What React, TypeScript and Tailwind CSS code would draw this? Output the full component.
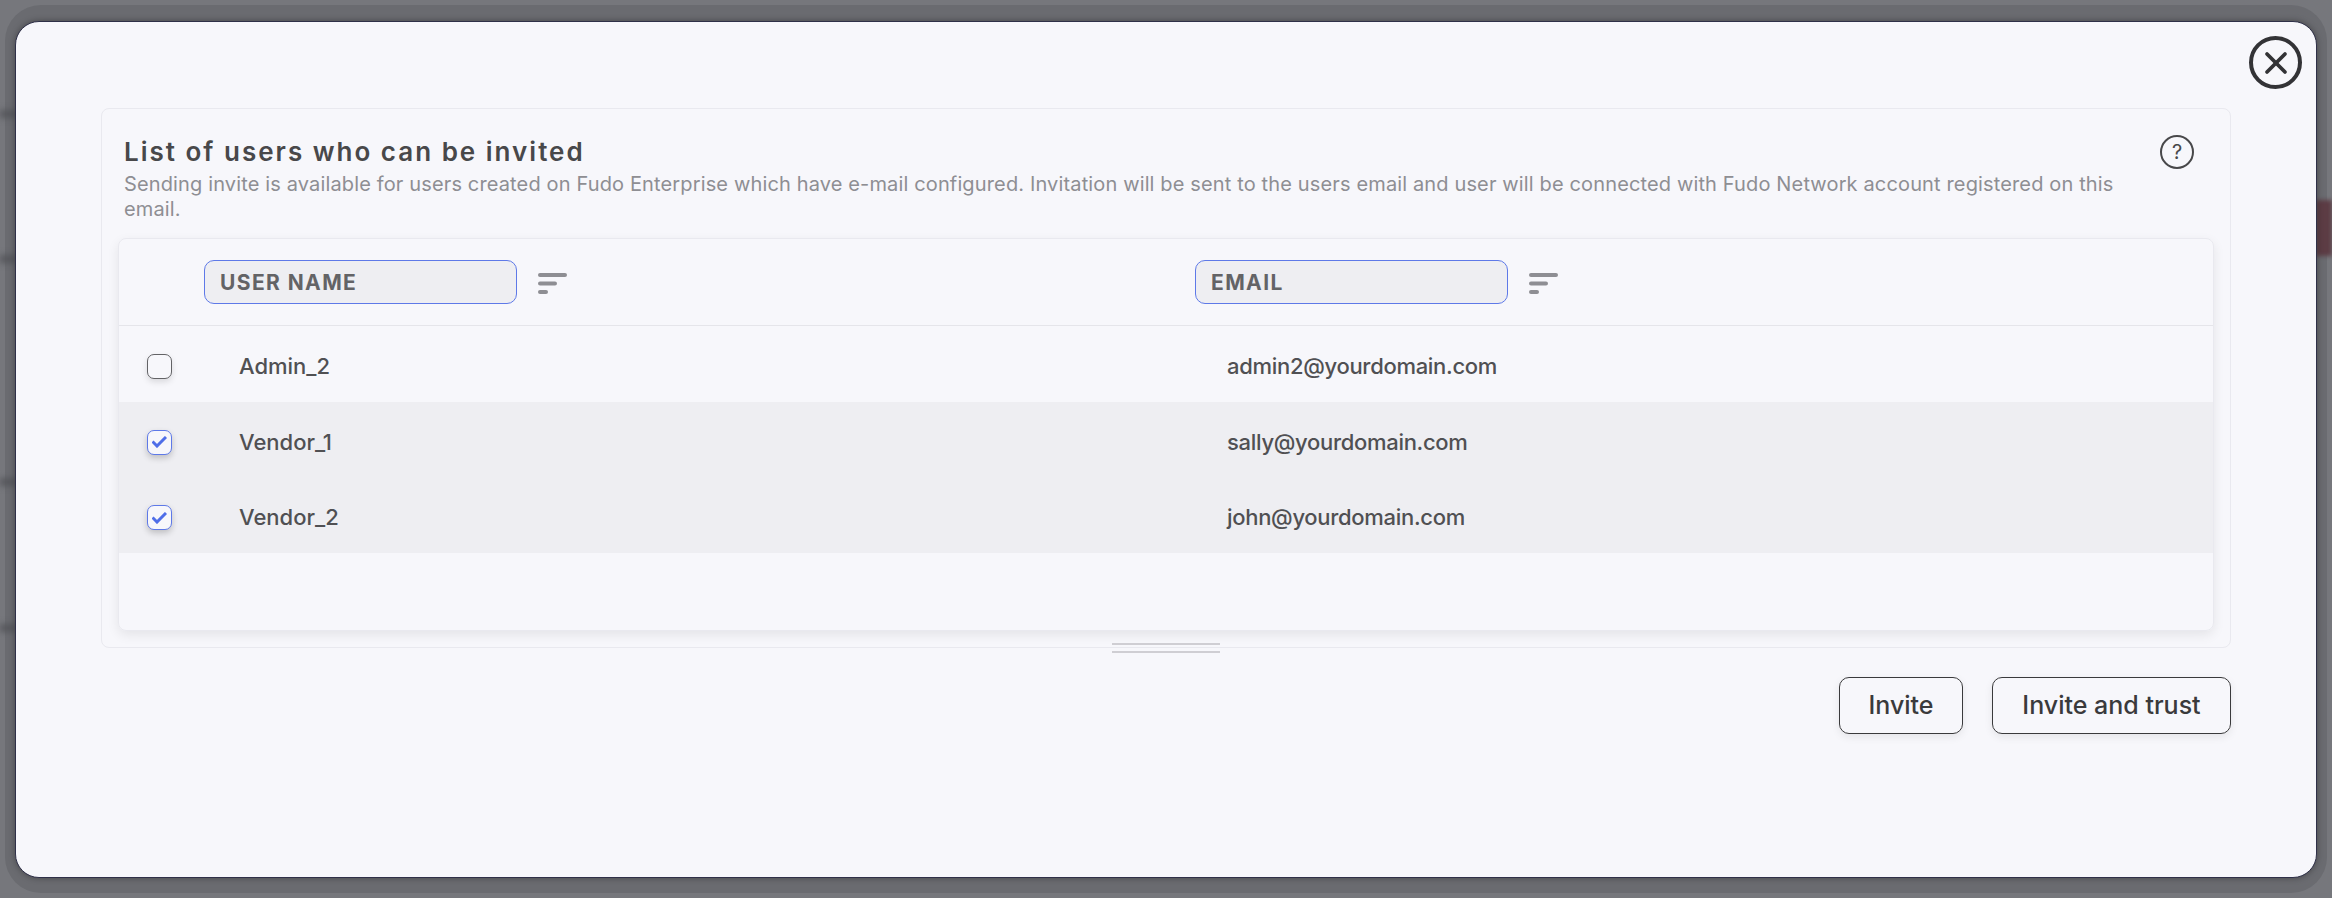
import { X } from "lucide-react";

const users = [
  { name: "Admin_2", email: "admin2@yourdomain.com", checked: false },
  { name: "Vendor_1", email: "sally@yourdomain.com", checked: true },
  { name: "Vendor_2", email: "john@yourdomain.com", checked: true },
];

function SortIcon() {
  return (
    <svg width="30" height="22" viewBox="0 0 30 22" className="mt-[3px] shrink-0">
      <rect x="0" y="0" width="29" height="4" rx="2" fill="#8e8e93" />
      <rect x="0" y="8.5" width="19" height="4" rx="2" fill="#8e8e93" />
      <rect x="0" y="17" width="10" height="4" rx="2" fill="#8e8e93" />
    </svg>
  );
}

function HeaderCell({ label, className }: { label: string; className: string }) {
  return (
    <div className={`flex items-center gap-[21px] ${className}`}>
      <div className="flex h-[44px] w-[313px] items-center rounded-[10px] border border-[#5e79e8] bg-[#eeeef2] px-[15px] pt-[2px] text-[21px] font-bold tracking-[1.4px] text-[#636366]">
        {label}
      </div>
      <SortIcon />
    </div>
  );
}

function Check({ checked }: { checked: boolean }) {
  if (!checked) {
    return (
      <div className="h-[25px] w-[25px] rounded-[7px] border border-[#636366] bg-[#f7f7fb] shadow-[0_3px_6px_rgba(0,0,0,0.12)]" />
    );
  }
  return (
    <div className="flex h-[25px] w-[25px] items-center justify-center rounded-[7px] border border-[#5e79e8] bg-[#f7f7fb] shadow-[0_3px_6px_rgba(0,0,0,0.2)]">
      <svg width="15" height="12" viewBox="0 0 15 12">
        <path d="M0.5 5.5 L5 10 L14 1" fill="none" stroke="#4f6ee8" strokeWidth="3" />
      </svg>
    </div>
  );
}

export default function App() {
  return (
    <div className="relative h-[898px] w-[2332px] overflow-hidden bg-[#76777c] p-[5px] font-['Inter',sans-serif]">
      <div className="h-full w-full rounded-[36px] bg-[#6a6b70] pt-[16px] pl-[10px] pr-[10px]">
        {/* blurred page content showing past the modal edge */}
        <div className="absolute top-[200px] right-0 h-[56px] w-[16px] bg-[#5c3c44] blur-[2px]" />
        <div className="absolute top-[110px] left-0 h-[8px] w-[16px] bg-[#55565b] blur-[3px]" />
        <div className="absolute top-[255px] left-0 h-[8px] w-[16px] bg-[#55565b] blur-[3px]" />
        <div className="absolute top-[478px] left-0 h-[8px] w-[16px] bg-[#55565b] blur-[3px]" />
        <div className="absolute top-[624px] left-0 h-[8px] w-[16px] bg-[#55565b] blur-[3px]" />

        <div className="relative h-[857px] w-[2302px] rounded-[24px] border border-[#2f3048] bg-[#f7f7fb] pt-[86px] pl-[85px] pr-[85px] shadow-[0_0_6px_rgba(0,0,0,0.35)]">
          <button className="absolute top-[14px] right-[14px] flex h-[53px] w-[53px] items-center justify-center rounded-full border-[4px] border-[#333336] text-[#333336]">
            <X size={36} strokeWidth={2.5} className="shrink-0" />
          </button>

          <div className="flex h-[540px] flex-col rounded-[8px] border border-[#e9e9ef] px-[16px] pt-[24px]">
            <div className="flex items-start justify-between pl-[6px] pr-[6px]">
              <div className="w-[2010px]">
                <h2 className="mb-[1px] text-[26px] leading-[38px] font-semibold tracking-[2px] text-[#48484a]">
                  List of users who can be invited
                </h2>
                <p className="text-[20px] leading-[25px] tracking-[0.14px] text-[#8e8e93]">
                  Sending invite is available for users created on Fudo Enterprise which have e-mail configured. Invitation will be sent to the users email and user will be connected with Fudo Network account registered on this email.
                </p>
              </div>
              <div className="mt-[2px] mr-[14px] flex h-[34px] w-[34px] items-center justify-center rounded-full border-2 border-[#48484a] text-[20px] leading-none text-[#48484a]">
                ?
              </div>
            </div>

            <div className="mt-[16px] flex h-[393px] flex-col rounded-[8px] border border-[#e9e9ef] shadow-[0_4px_12px_rgba(0,0,0,0.08)]">
              <div className="flex h-[87px] items-center border-b border-[#e5e5ea] pl-[85px]">
                <HeaderCell label="USER NAME" className="w-[991px]" />
                <HeaderCell label="EMAIL" className="" />
              </div>
              {users.map((u) => (
                <div key={u.name} className={`flex h-[75.5px] items-center pt-[6px] pl-[28px] text-[22px] font-medium text-[#505053] ${u.checked ? "bg-[#eeeef2]" : ""}`}>
                  <Check checked={u.checked} />
                  <span className="ml-[67px] w-[988px]">{u.name}</span>
                  <span className="tracking-[-0.3px]">{u.email}</span>
                </div>
              ))}
            </div>

            <div className="relative">
              <div className="absolute top-[12px] left-[994px] h-[10px] w-[108px] border-t-2 border-b-2 border-[#cfced3]" />
            </div>
          </div>

          <div className="mt-[29px] flex justify-end gap-[29px]">
            <button className="h-[57px] w-[124px] rounded-[10px] border border-[#3a3a3c] text-[25px] font-medium text-[#3a3a3c] shadow-[0_3px_8px_rgba(0,0,0,0.08)]">
              Invite
            </button>
            <button className="h-[57px] w-[239px] rounded-[10px] border border-[#3a3a3c] text-[25px] font-medium text-[#3a3a3c] shadow-[0_3px_8px_rgba(0,0,0,0.08)]">
              Invite and trust
            </button>
          </div>
        </div>
      </div>
    </div>
  );
}
